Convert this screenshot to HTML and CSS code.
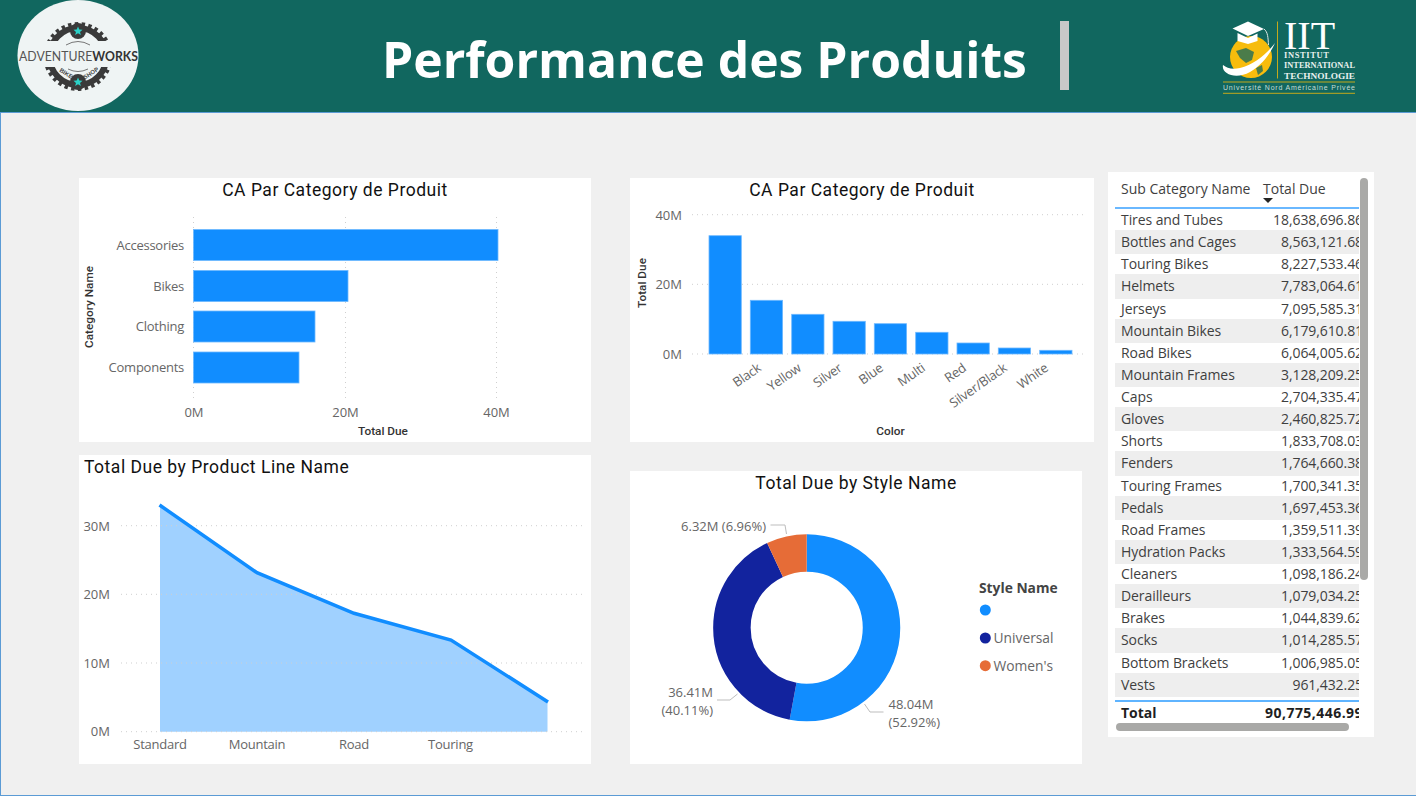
FILE: index.html
```html
<!DOCTYPE html>
<html lang="fr">
<head>
    <meta charset="UTF-8">
    <title>Performance des Produits</title>
    <link rel="stylesheet" href="styles.css">
</head>
<body>
    <header class="top-bar">
        <svg class="logo-aw" width="122" height="112" viewBox="17 0 122 112">
            <defs>
                <clipPath id="gear-clip">
                    <rect x="30" y="15" width="96" height="26"/>
                    <rect x="30" y="67" width="96" height="26"/>
                </clipPath>
            </defs>
            <ellipse cx="78" cy="55.5" rx="60.5" ry="55.500" fill="#eff4f4"/>
            <g clip-path="url(#gear-clip)" fill="none" stroke="#3a3a3a">
                <circle cx="78" cy="56.5" r="28.500" stroke-width="6"/>
                <circle cx="78" cy="56.5" r="32" stroke-width="5" stroke-dasharray="3.400 3.300"/>
            </g>
            <circle cx="78" cy="31" r="8" fill="#3a3a3a"/>
            <circle cx="78" cy="82" r="8" fill="#3a3a3a"/>
            <polygon points="78,26.5 79.3,29.6 82.5,29.8 80,31.9 80.9,35 78,33.3 75.1,35 76,31.9 73.5,29.8 76.7,29.6" fill="#2bd1c7"/>
            <polygon points="78,77.5 79.3,80.6 82.5,80.8 80,82.9 80.9,86 78,84.3 75.1,86 76,82.9 73.5,80.8 76.7,80.6" fill="#2bd1c7"/>
            <path d="M66 45 Q78 38 90 45" fill="none" stroke="#777" stroke-width="1"/>
            <path d="M68 69 Q78 74 88 69" fill="none" stroke="#777" stroke-width="1"/>
            <text class="aw-name" x="78.500" y="60.800" text-anchor="middle" textLength="119" lengthAdjust="spacingAndGlyphs">ADVENTURE<tspan class="aw-bold">WORKS</tspan></text>
            <text class="aw-small" transform="translate(65 75) rotate(32)" text-anchor="middle">BIKE</text>
            <text class="aw-small" transform="translate(92 75) rotate(-32)" text-anchor="middle">SHOP</text>
        </svg>
        <h1 class="page-title">Performance des Produits</h1>
        <div class="title-bar"></div>
        <svg class="logo-iit" width="140" height="76" viewBox="1220 20 140 76">
            <circle cx="1251" cy="57" r="21" fill="#f7bc0d"/>
            <path d="M1236 51 L1246 48 L1254 52 L1252 60 L1246 63 L1240 58 Z" fill="#11675f" opacity="0.75"/>
            <path d="M1256 68 L1262 65 L1263 71 L1258 75 Z" fill="#11675f" opacity="0.75"/>
            <path d="M1223 65 C1221 74 1236 80 1250 72 C1262 65 1270 54 1275 43 C1266 55 1253 65 1240 68 C1232 70 1227 68 1223 65 Z" fill="#fff"/>
            <polygon points="1232.5,28.5 1248,21.5 1264,29 1248,36" fill="#fff"/>
            <polygon points="1237.5,33 1248,38 1257.5,33.5 1257.5,41 1248,44 1237.5,41" fill="#fff"/>
            <path d="M1264 29 C1268 32 1268 38 1268.500 45" fill="none" stroke="#dfe9e6" stroke-width="1"/>
            <rect x="1277" y="21.500" width="1" height="57" fill="#c3a91c"/>
            <text class="iit-big" x="1284" y="48.500">IIT</text>
            <text class="iit-line" x="1284" y="58" textLength="45">INSTITUT</text>
            <text class="iit-line" x="1284" y="68" textLength="71" lengthAdjust="spacingAndGlyphs">INTERNATIONAL</text>
            <text class="iit-line" x="1284" y="78.500" textLength="71" lengthAdjust="spacingAndGlyphs">TECHNOLOGIE</text>
            <rect x="1223" y="81.500" width="132" height="1" fill="#c3a91c"/>
            <text class="iit-sub" x="1223" y="90" textLength="132">Université Nord Américaine Privée</text>
            <rect x="1223" y="92.800" width="132" height="1" fill="#c3a91c"/>
        </svg>
    </header>

    <main class="canvas">
        <div class="col col-left">
            <section class="card card-cat">
                <h2 class="card-title">CA Par Category de Produit</h2>
                <svg width="512" height="240" viewBox="79 202 512 240">
                    <line class="grid" x1="193.500" y1="217" x2="193.500" y2="402"/>
                    <line class="grid" x1="345.500" y1="217" x2="345.500" y2="402"/>
                    <line class="grid" x1="496.500" y1="217" x2="496.500" y2="402"/>
                    <rect class="bar" x="193.500" y="229.500" width="304.500" height="31"/>
                    <rect class="bar" x="193.500" y="270.500" width="154.500" height="31"/>
                    <rect class="bar" x="193.500" y="311" width="121.500" height="31"/>
                    <rect class="bar" x="193.500" y="352" width="105.500" height="31"/>
                    <text class="tick cat end" x="184" y="250">Accessories</text>
                    <text class="tick cat end" x="184" y="291">Bikes</text>
                    <text class="tick cat end" x="184" y="331">Clothing</text>
                    <text class="tick cat end" x="184" y="372">Components</text>
                    <text class="tick mid" x="194" y="416.500">0M</text>
                    <text class="tick mid" x="345.500" y="416.500">20M</text>
                    <text class="tick mid" x="496.500" y="416.500">40M</text>
                    <text class="axis-name mid" x="383" y="435">Total Due</text>
                    <text class="axis-name mid" transform="translate(93 307) rotate(-90)">Category Name</text>
                </svg>
            </section>
            <section class="card card-line">
                <h2 class="card-title title-left">Total Due by Product Line Name</h2>
                <svg width="512" height="285" viewBox="79 479 512 285">
                    <polygon class="area" points="160,505 257,572.700 354,613.300 451,640 547.500,702 547.500,731.700 160,731.700"/>
                    <line class="grid" x1="121" y1="525.700" x2="582" y2="525.700"/>
                    <line class="grid" x1="121" y1="594.300" x2="582" y2="594.300"/>
                    <line class="grid" x1="121" y1="663" x2="582" y2="663"/>
                    <line class="grid" x1="121" y1="731.700" x2="582" y2="731.700"/>
                    <polyline class="trend" points="159.500,505 257,572.700 354,613.300 451,640 548,702"/>
                    <text class="tick end" x="110" y="530.500">30M</text>
                    <text class="tick end" x="110" y="599">20M</text>
                    <text class="tick end" x="110" y="667.500">10M</text>
                    <text class="tick end" x="110" y="736">0M</text>
                    <text class="tick cat mid" x="160" y="748.500">Standard</text>
                    <text class="tick cat mid" x="257" y="748.500">Mountain</text>
                    <text class="tick cat mid" x="354" y="748.500">Road</text>
                    <text class="tick cat mid" x="450.500" y="748.500">Touring</text>
                </svg>
            </section>
        </div>

        <div class="col col-mid">
            <section class="card card-color">
                <h2 class="card-title">CA Par Category de Produit</h2>
                <svg width="464" height="240" viewBox="630 202 464 240">
                    <line class="grid" x1="692" y1="214.700" x2="1087" y2="214.700"/>
                    <line class="grid" x1="692" y1="284.300" x2="1087" y2="284.300"/>
                    <line class="grid" x1="692" y1="354" x2="1087" y2="354"/>
                    <rect class="bar" x="709" y="235.700" width="32.300" height="118.300"/>
                    <rect class="bar" x="750.300" y="300.300" width="32.300" height="53.700"/>
                    <rect class="bar" x="791.700" y="314.300" width="32.300" height="39.700"/>
                    <rect class="bar" x="833" y="321.300" width="32.300" height="32.700"/>
                    <rect class="bar" x="874.300" y="323.700" width="32.300" height="30.300"/>
                    <rect class="bar" x="915.700" y="332.300" width="32.300" height="21.700"/>
                    <rect class="bar" x="957" y="343" width="32.300" height="11"/>
                    <rect class="bar" x="998.300" y="348" width="32.300" height="6"/>
                    <rect class="bar" x="1039.700" y="350.300" width="32.300" height="3.700"/>
                    <text class="tick end" x="682" y="219.500">40M</text>
                    <text class="tick end" x="682" y="289">20M</text>
                    <text class="tick end" x="682" y="358.500">0M</text>
                    <text class="tick cat end" transform="translate(762 370) rotate(-35)">Black</text>
                    <text class="tick cat end" transform="translate(802 370) rotate(-35)">Yellow</text>
                    <text class="tick cat end" transform="translate(843 370) rotate(-35)">Silver</text>
                    <text class="tick cat end" transform="translate(884 370) rotate(-35)">Blue</text>
                    <text class="tick cat end" transform="translate(926 370) rotate(-35)">Multi</text>
                    <text class="tick cat end" transform="translate(967 370) rotate(-35)">Red</text>
                    <text class="tick cat end" transform="translate(1008 370) rotate(-35)">Silver/Black</text>
                    <text class="tick cat end" transform="translate(1049 370) rotate(-35)">White</text>
                    <text class="axis-name mid" x="890.500" y="435">Color</text>
                    <text class="axis-name mid" transform="translate(646 283) rotate(-90)">Total Due</text>
                </svg>
            </section>
            <section class="card card-style">
                <h2 class="card-title">Total Due by Style Name</h2>
                <svg width="452" height="269" viewBox="630 495 452 269">
                    <g transform="rotate(-90 806.700 627.700)" fill="none" stroke-width="37.500">
                        <circle cx="806.700" cy="627.700" r="74.800" pathLength="100" stroke="#118dff" stroke-dasharray="52.920 47.080"/>
                        <circle cx="806.700" cy="627.700" r="74.800" pathLength="100" stroke="#12239e" stroke-dasharray="40.120 59.880" stroke-dashoffset="-52.920"/>
                        <circle cx="806.700" cy="627.700" r="74.800" pathLength="100" stroke="#e66c37" stroke-dasharray="6.960 93.040" stroke-dashoffset="-93.040"/>
                    </g>
                    <polyline class="leader" points="770.500,525 785,525 786.500,534"/>
                    <polyline class="leader" points="717,700 730,700 737.500,694"/>
                    <polyline class="leader" points="883.500,712 870,712 864.500,704"/>
                    <text class="tick end" x="766" y="530.500">6.32M (6.96%)</text>
                    <text class="tick end" x="713" y="696.500">36.41M</text>
                    <text class="tick end" x="713" y="715">(40.11%)</text>
                    <text class="tick" x="888.500" y="708.500">48.04M</text>
                    <text class="tick" x="888.500" y="726.500">(52.92%)</text>
                    <text class="legend-title" x="979" y="592.500">Style Name</text>
                    <circle cx="985.300" cy="610" r="5.500" fill="#118dff"/>
                    <circle cx="985.300" cy="638" r="5.500" fill="#12239e"/>
                    <text class="legend-item" x="993.500" y="643">Universal</text>
                    <circle cx="985.300" cy="665.700" r="5.500" fill="#e66c37"/>
                    <text class="legend-item" x="993.500" y="670.500">Women's</text>
                </svg>
            </section>
        </div>

        <section class="table-card">
            <div class="t-head">
                <div class="t-name">Sub Category Name</div>
                <div class="t-val head-val">Total Due<span class="sort-arrow"></span></div>
            </div>
            <div class="t-row"><div class="t-name">Tires and Tubes</div><div class="t-val">18,638,696.86</div></div>
            <div class="t-row"><div class="t-name">Bottles and Cages</div><div class="t-val">8,563,121.68</div></div>
            <div class="t-row"><div class="t-name">Touring Bikes</div><div class="t-val">8,227,533.46</div></div>
            <div class="t-row"><div class="t-name">Helmets</div><div class="t-val">7,783,064.61</div></div>
            <div class="t-row"><div class="t-name">Jerseys</div><div class="t-val">7,095,585.31</div></div>
            <div class="t-row"><div class="t-name">Mountain Bikes</div><div class="t-val">6,179,610.81</div></div>
            <div class="t-row"><div class="t-name">Road Bikes</div><div class="t-val">6,064,005.62</div></div>
            <div class="t-row"><div class="t-name">Mountain Frames</div><div class="t-val">3,128,209.25</div></div>
            <div class="t-row"><div class="t-name">Caps</div><div class="t-val">2,704,335.47</div></div>
            <div class="t-row"><div class="t-name">Gloves</div><div class="t-val">2,460,825.72</div></div>
            <div class="t-row"><div class="t-name">Shorts</div><div class="t-val">1,833,708.03</div></div>
            <div class="t-row"><div class="t-name">Fenders</div><div class="t-val">1,764,660.38</div></div>
            <div class="t-row"><div class="t-name">Touring Frames</div><div class="t-val">1,700,341.35</div></div>
            <div class="t-row"><div class="t-name">Pedals</div><div class="t-val">1,697,453.36</div></div>
            <div class="t-row"><div class="t-name">Road Frames</div><div class="t-val">1,359,511.39</div></div>
            <div class="t-row"><div class="t-name">Hydration Packs</div><div class="t-val">1,333,564.59</div></div>
            <div class="t-row"><div class="t-name">Cleaners</div><div class="t-val">1,098,186.24</div></div>
            <div class="t-row"><div class="t-name">Derailleurs</div><div class="t-val">1,079,034.25</div></div>
            <div class="t-row"><div class="t-name">Brakes</div><div class="t-val">1,044,839.62</div></div>
            <div class="t-row"><div class="t-name">Socks</div><div class="t-val">1,014,285.57</div></div>
            <div class="t-row"><div class="t-name">Bottom Brackets</div><div class="t-val">1,006,985.05</div></div>
            <div class="t-row"><div class="t-name">Vests</div><div class="t-val">961,432.25</div></div>
            <div class="t-total">
                <div class="t-name">Total</div>
                <div class="t-val">90,775,446.99</div>
            </div>
            <div class="scroll-y"></div>
            <div class="scroll-x"></div>
        </section>
    </main>
</body>
</html>
```

FILE: styles.css
```css
* {
    box-sizing: border-box;
}

body {
    margin: 0;
    width: 1416px;
    height: 796px;
    overflow: hidden;
    background-color: #f0f0f0;
    font-family: "Open Sans", "Noto Sans", sans-serif;
}

.top-bar {
    display: flex;
    align-items: flex-start;
    height: 112px;
    background-color: #11675f;
}

.logo-aw {
    display: block;
    margin-left: 17px;
    flex-shrink: 0;
}

.aw-name {
    font-family: "Lato", sans-serif;
    font-size: 14px;
    fill: #555;
}

.aw-bold {
    font-weight: 700;
    fill: #333;
}

.aw-small {
    font-family: "Liberation Sans", sans-serif;
    font-size: 6px;
    font-weight: 700;
    fill: #444;
}

.page-title {
    margin: 27px 0 0 243px;
    font-size: 49.8px;
    line-height: 64px;
    font-weight: 700;
    color: #ffffff;
    white-space: nowrap;
}

.title-bar {
    width: 9px;
    height: 69px;
    margin: 21px 0 0 33.5px;
    background-color: #c8c8c8;
    flex-shrink: 0;
}

.logo-iit {
    display: block;
    margin: 20px 0 0 151px;
    flex-shrink: 0;
}

.iit-big {
    font-family: "Liberation Serif", serif;
    font-size: 40px;
    fill: #ffffff;
}

.iit-line {
    font-family: "Liberation Serif", serif;
    font-size: 8.5px;
    font-weight: 700;
    fill: #e8f0ee;
}

.iit-sub {
    font-family: "Liberation Sans", sans-serif;
    font-size: 7px;
    fill: #c5dcd5;
}

.canvas {
    display: flex;
    align-items: flex-start;
    height: 684px;
    padding: 59px 0 0 78px;
    border-top: 1px solid #5b9bd5;
    border-left: 1px solid #5b9bd5;
    border-bottom: 1px solid #5b9bd5;
}

.col {
    display: flex;
    flex-direction: column;
    margin-top: 6px;
}

.col-left {
    width: 512px;
    gap: 13px;
}

.col-mid {
    width: 464px;
    margin-left: 39px;
    gap: 29px;
}

.card {
    background-color: #ffffff;
}

.card svg {
    display: block;
}

.card-cat, .card-color {
    height: 264px;
}

.card-line {
    height: 309px;
}

.card-style {
    width: 452px;
    height: 293px;
}

.card-title {
    margin: 0;
    height: 24px;
    font-family: "Roboto", sans-serif;
    font-size: 17.5px;
    line-height: 24px;
    font-weight: 400;
    letter-spacing: 0.52px;
    color: #111111;
    text-align: center;
}

.title-left {
    padding-left: 5px;
    text-align: left;
}

.grid {
    stroke: #cfcfcf;
    stroke-width: 1;
    stroke-dasharray: 1 4;
}

.bar {
    fill: #118dff;
    stroke: #6db8ff;
    stroke-width: 0.8;
}

.area {
    fill: #a0d1ff;
}

.trend {
    fill: none;
    stroke: #118dff;
    stroke-width: 3.5;
}

.leader {
    fill: none;
    stroke: #bdbdbd;
    stroke-width: 1;
}

.tick {
    font-size: 13px;
    fill: #666666;
}

.cat {
    letter-spacing: -0.25px;
}

.end {
    text-anchor: end;
}

.mid {
    text-anchor: middle;
}

.axis-name {
    font-family: "Roboto", sans-serif;
    font-size: 11.8px;
    font-weight: 500;
    fill: #333333;
}

.legend-title {
    font-size: 13.8px;
    font-weight: 700;
    fill: #444444;
}

.legend-item {
    font-size: 13.8px;
    fill: #666666;
}

/* table */
.table-card {
    position: relative;
    width: 266px;
    height: 565px;
    margin-left: 14px;
    padding-left: 7px;
    background-color: #ffffff;
    font-size: 14px;
    color: #3f3f3f;
}

.t-head {
    display: flex;
    width: 244px;
    height: 37px;
    line-height: 34px;
    border-bottom: 2px solid #6ab8ff;
}

.t-name {
    flex: 0 0 142px;
    padding-left: 6px;
    white-space: nowrap;
}

.t-val {
    flex: 0 0 106px;
    text-align: right;
    white-space: nowrap;
}

.head-val {
    position: relative;
    padding-left: 6px;
    text-align: left;
}

.sort-arrow {
    position: absolute;
    left: 6px;
    top: 26px;
    border-left: 5px solid transparent;
    border-right: 5px solid transparent;
    border-top: 5px solid #252423;
}

.t-row {
    display: flex;
    width: 244px;
    height: 22.13px;
    line-height: 22px;
    letter-spacing: -0.08px;
    overflow: hidden;
}

.t-row:nth-of-type(odd) {
    background-color: #eeeeee;
    box-shadow: 0 1px 0 #eeeeee, 0 -1px 0 #eeeeee;
}

.t-total {
    display: flex;
    width: 244px;
    height: 24px;
    margin-top: 4px;
    border-top: 2px solid #5fb4ff;
    line-height: 21px;
    font-weight: 700;
    color: #1f1f1f;
    overflow: hidden;
}

.t-total .t-val {
    letter-spacing: 0.45px;
}

.scroll-y {
    position: absolute;
    left: 252px;
    top: 6px;
    width: 8px;
    height: 402px;
    border-radius: 4px;
    background-color: #a9a9a7;
}

.scroll-x {
    position: absolute;
    left: 8px;
    top: 551px;
    width: 233px;
    height: 8px;
    border-radius: 4px;
    background-color: #a9a9a7;
}
```
